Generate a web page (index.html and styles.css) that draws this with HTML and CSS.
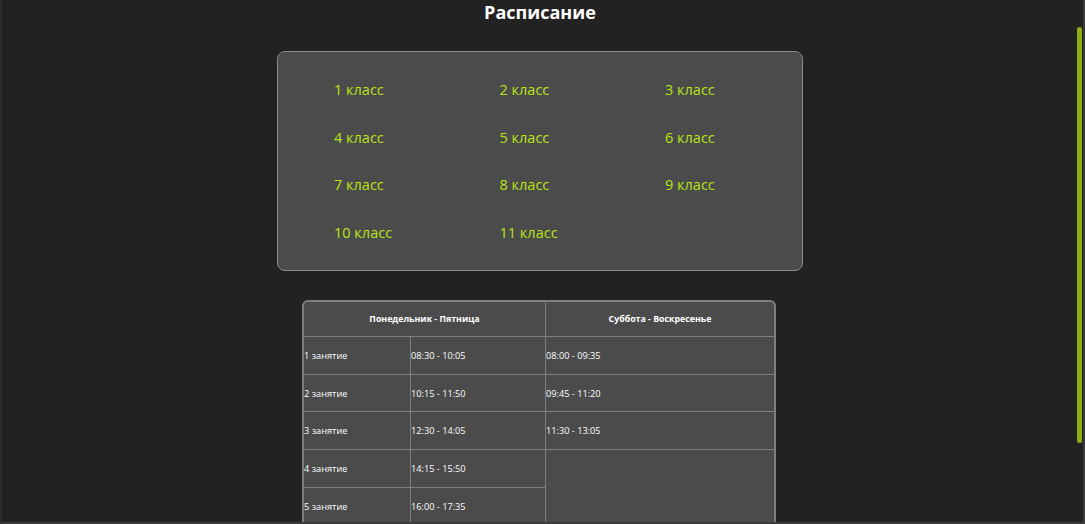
FILE: index.html
```html
<!DOCTYPE html>
<html lang="ru">
<head>
  <meta charset="UTF-8">
  <meta name="viewport" content="width=device-width, initial-scale=1.0">
  <title>Расписание</title>
  <link rel="stylesheet" href="styles.css">
</head>
<body>
  <div class="page">
    <h1>Расписание</h1>

    <div class="classes">
      <a href="#">1 класс</a>
      <a href="#">2 класс</a>
      <a href="#">3 класс</a>
      <a href="#">4 класс</a>
      <a href="#">5 класс</a>
      <a href="#">6 класс</a>
      <a href="#">7 класс</a>
      <a href="#">8 класс</a>
      <a href="#">9 класс</a>
      <a href="#">10 класс</a>
      <a href="#">11 класс</a>
    </div>

    <table class="schedule">
      <tr class="head">
        <th colspan="2">Понедельник - Пятница</th>
        <th class="last">Суббота - Воскресенье</th>
      </tr>
      <tr>
        <td class="c1">1 занятие</td>
        <td class="c2">08:30 - 10:05</td>
        <td class="last">08:00 - 09:35</td>
      </tr>
      <tr>
        <td class="c1">2 занятие</td>
        <td class="c2">10:15 - 11:50</td>
        <td class="last">09:45 - 11:20</td>
      </tr>
      <tr>
        <td class="c1">3 занятие</td>
        <td class="c2">12:30 - 14:05</td>
        <td class="last">11:30 - 13:05</td>
      </tr>
      <tr>
        <td class="c1">4 занятие</td>
        <td class="c2">14:15 - 15:50</td>
        <td class="last" rowspan="2"></td>
      </tr>
      <tr>
        <td class="c1">5 занятие</td>
        <td class="c2">16:00 - 17:35</td>
      </tr>
    </table>
  </div>

  <div class="frame"></div>
  <div class="thumb"></div>
</body>
</html>
```

FILE: styles.css
```css
html, body {
  margin: 0;
  height: 100%;
  overflow: hidden;
}
body {
  background-color: #222222;
  font-family: "Open Sans", "Noto Sans", sans-serif;
  color: #ffffff;
}
.page {
  width: 1080px;
  display: flex;
  flex-direction: column;
  align-items: center;
}
h1 {
  margin: 0;
  font-size: 18px;
  line-height: 24px;
  font-weight: 700;
}
.classes {
  margin-top: 27px;
  width: 526px;
  box-sizing: border-box;
  background-color: #4b4b4b;
  border: 1px solid #8c8c8c;
  border-radius: 8px;
  padding: 14px 0 14px 56px;
  display: grid;
  grid-template-columns: repeat(3, 165.5px);
  grid-auto-rows: 47.5px;
  align-items: center;
}
.classes a {
  color: #b9e414;
  text-decoration: none;
  font-size: 14.5px;
}
.schedule {
  margin-top: 29px;
  margin-right: 2px;
  width: 474px;
  border-spacing: 0;
  background-color: #4b4b4b;
  border: 2px solid #7e7e7e;
  border-radius: 6px;
  font-size: 9.2px;
  font-weight: 500;
}
.schedule tr {
  height: 37.7px;
}
.schedule tr.head {
  height: 35px;
}
.schedule th,
.schedule td {
  padding: 0;
  border-right: 1px solid #7e7e7e;
  border-bottom: 1px solid #7e7e7e;
  text-align: left;
}
.schedule th {
  text-align: center;
  font-size: 8.8px;
  font-weight: 700;
}
.schedule .last {
  border-right: none;
}
.schedule .c1 {
  width: 106px;
}
.schedule .c2 {
  width: 134px;
}
.frame {
  position: fixed;
  inset: 0;
  border-left: 2px solid #2c2c2c;
  border-right: 2px solid #3a3a3a;
  border-bottom: 2px solid #3b3b3b;
  pointer-events: none;
}
.thumb {
  position: fixed;
  top: 27px;
  left: 1077px;
  width: 5px;
  height: 416px;
  border-radius: 3px;
  background-color: #8cb011;
}
```
